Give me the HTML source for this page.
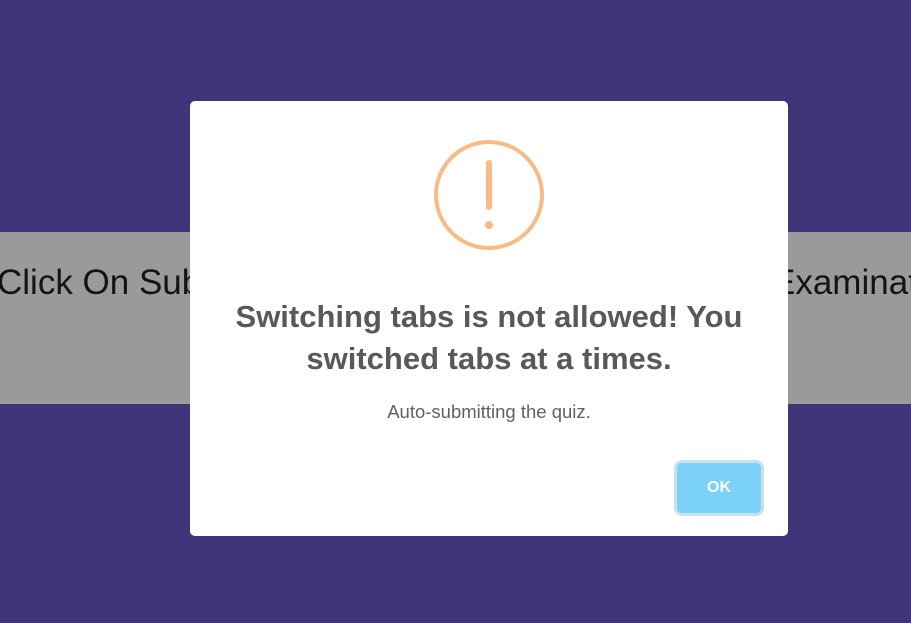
<!DOCTYPE html>
<html><head><style>
html,body{margin:0;width:911px;height:623px;overflow:hidden}
body{background:#41357a;position:relative;font-family:"Liberation Sans",sans-serif}
.band{position:absolute;left:0;top:232px;width:911px;height:172px;background:#9a9a9a;overflow:hidden}
.bt{position:absolute;top:31px;font-size:35px;color:#141414;white-space:nowrap}
.modal{position:absolute;left:190px;top:101px;width:598px;height:435px;background:#fff;border-radius:5px}
.t{position:absolute;left:0;width:598px;text-align:center;top:195px;font-size:31px;font-weight:bold;color:#595959;line-height:42px}
.s{position:absolute;left:0;width:598px;text-align:center;top:300px;font-size:18.5px;color:#616161}
.btn{position:absolute;left:487px;top:362px;width:84px;height:50px;background:#7cd1f9;border-radius:5px;box-shadow:0 0 0 3px #c8dfee;color:#fff;font-weight:bold;font-size:16px;text-align:center;line-height:50px}
</style></head><body>
<div class="band">
<div class="bt" style="left:-3px">Click On Submit</div>
<div class="bt" style="left:772px">Examination</div>
</div>
<div class="modal">
<svg style="position:absolute;left:243px;top:39px" width="112" height="112"><circle cx="56" cy="55" r="53" fill="none" stroke="#f8bb86" stroke-width="4"/><rect x="53" y="20" width="6" height="50" rx="3" fill="#f8bb86"/><circle cx="56" cy="85" r="4" fill="#f8bb86"/></svg>
<div class="t">Switching tabs is not allowed! You<br>switched tabs at a times.</div>
<div class="s">Auto-submitting the quiz.</div>
<div class="btn">OK</div>
</div>
</body></html>
